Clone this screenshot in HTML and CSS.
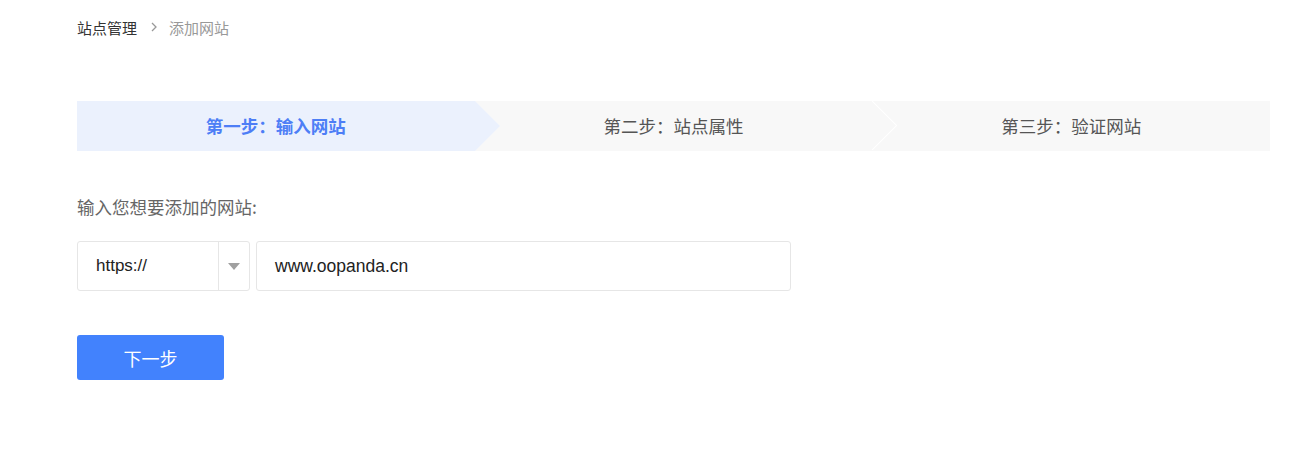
FILE: index.html
```html
<!DOCTYPE html>
<html lang="zh-CN">
<head>
<meta charset="utf-8">
<title>添加网站</title>
<link rel="stylesheet" href="styles.css">
</head>
<body>
<div class="page">
  <nav class="crumbs">
    <span class="crumb-root">站点管理</span>
    <svg class="crumb-sep" width="8" height="10" viewBox="0 0 8 10"><path d="M2 1 L6 5 L2 9" fill="none" stroke="#999" stroke-width="1.3"/></svg>
    <span class="crumb-cur">添加网站</span>
  </nav>

  <div class="steps">
    <div class="step step-active">第一步：输入网站</div>
    <div class="step step-mid">第二步：站点属性</div>
    <div class="step">第三步：验证网站</div>
  </div>

  <div class="label">输入您想要添加的网站:</div>

  <div class="form-row">
    <div class="select">
      <span class="select-val">https://</span>
      <span class="select-arrow"><svg width="12" height="7" viewBox="0 0 12 7"><path d="M0 0 H12 L6 7 Z" fill="#a0a0a0"/></svg></span>
    </div>
    <div class="input">www.oopanda.cn</div>
  </div>

  <button class="btn">下一步</button>
</div>
</body>
</html>
```
FILE: styles.css
```css
html, body {
  margin: 0;
  padding: 0;
  background: #fff;
}
body {
  font-family: "Liberation Sans", "Noto Sans CJK SC", sans-serif;
}
.page {
  padding: 17px 44px 0 77px;
}
.crumbs {
  display: flex;
  align-items: center;
  height: 20px;
  font-size: 15px;
  font-family: "Noto Sans CJK SC", sans-serif;
}
.crumb-root {
  color: #333;
}
.crumb-sep {
  margin: 0 11px 0 13px;
}
.crumb-cur {
  color: #999;
}
.steps {
  margin-top: 64px;
  display: flex;
  height: 50px;
  background: #f8f8f8;
  overflow: hidden;
}
.step {
  flex: 1;
  position: relative;
  display: flex;
  align-items: center;
  justify-content: center;
  padding-bottom: 2px;
  box-sizing: border-box;
  font-family: "Noto Sans CJK SC", sans-serif;
  font-size: 17.5px;
  color: #555;
}
.step-active {
  background: #ebf1fd;
  color: #4d7ef6;
  font-weight: bold;
  z-index: 2;
}
.step-active::after {
  content: "";
  position: absolute;
  left: 100%;
  top: 0;
  border-left: 25px solid #ebf1fd;
  border-top: 25px solid transparent;
  border-bottom: 25px solid transparent;
}
.step-mid::after {
  content: "";
  position: absolute;
  left: calc(100% - 17px);
  top: 7px;
  width: 35px;
  height: 35px;
  box-sizing: border-box;
  border-top: 1px solid #fff;
  border-right: 1px solid #fff;
  transform: rotate(45deg);
}
.label {
  margin-top: 44px;
  font-family: "Noto Sans CJK SC", sans-serif;
  font-size: 17.5px;
  line-height: 24px;
  color: #666;
}
.form-row {
  margin-top: 22px;
  display: flex;
  gap: 6px;
}
.select {
  width: 173px;
  height: 50px;
  box-sizing: border-box;
  border: 1px solid #e6e6e6;
  border-radius: 3px;
  display: flex;
  align-items: center;
}
.select-val {
  flex: 1;
  padding-left: 18px;
  font-size: 17px;
  color: #222;
}
.select-arrow {
  width: 30px;
  height: 100%;
  border-left: 1px solid #e6e6e6;
  display: flex;
  align-items: center;
  justify-content: center;
}
.input {
  width: 535px;
  height: 50px;
  box-sizing: border-box;
  border: 1px solid #e6e6e6;
  border-radius: 3px;
  padding-left: 18px;
  display: flex;
  align-items: center;
  font-size: 17.5px;
  color: #222;
}
.btn {
  display: block;
  margin-top: 44px;
  width: 147px;
  height: 45px;
  border: none;
  border-radius: 3px;
  background: #4282fd;
  color: #fff;
  font-family: "Noto Sans CJK SC", sans-serif;
  font-size: 18px;
  padding: 0;
}
```
